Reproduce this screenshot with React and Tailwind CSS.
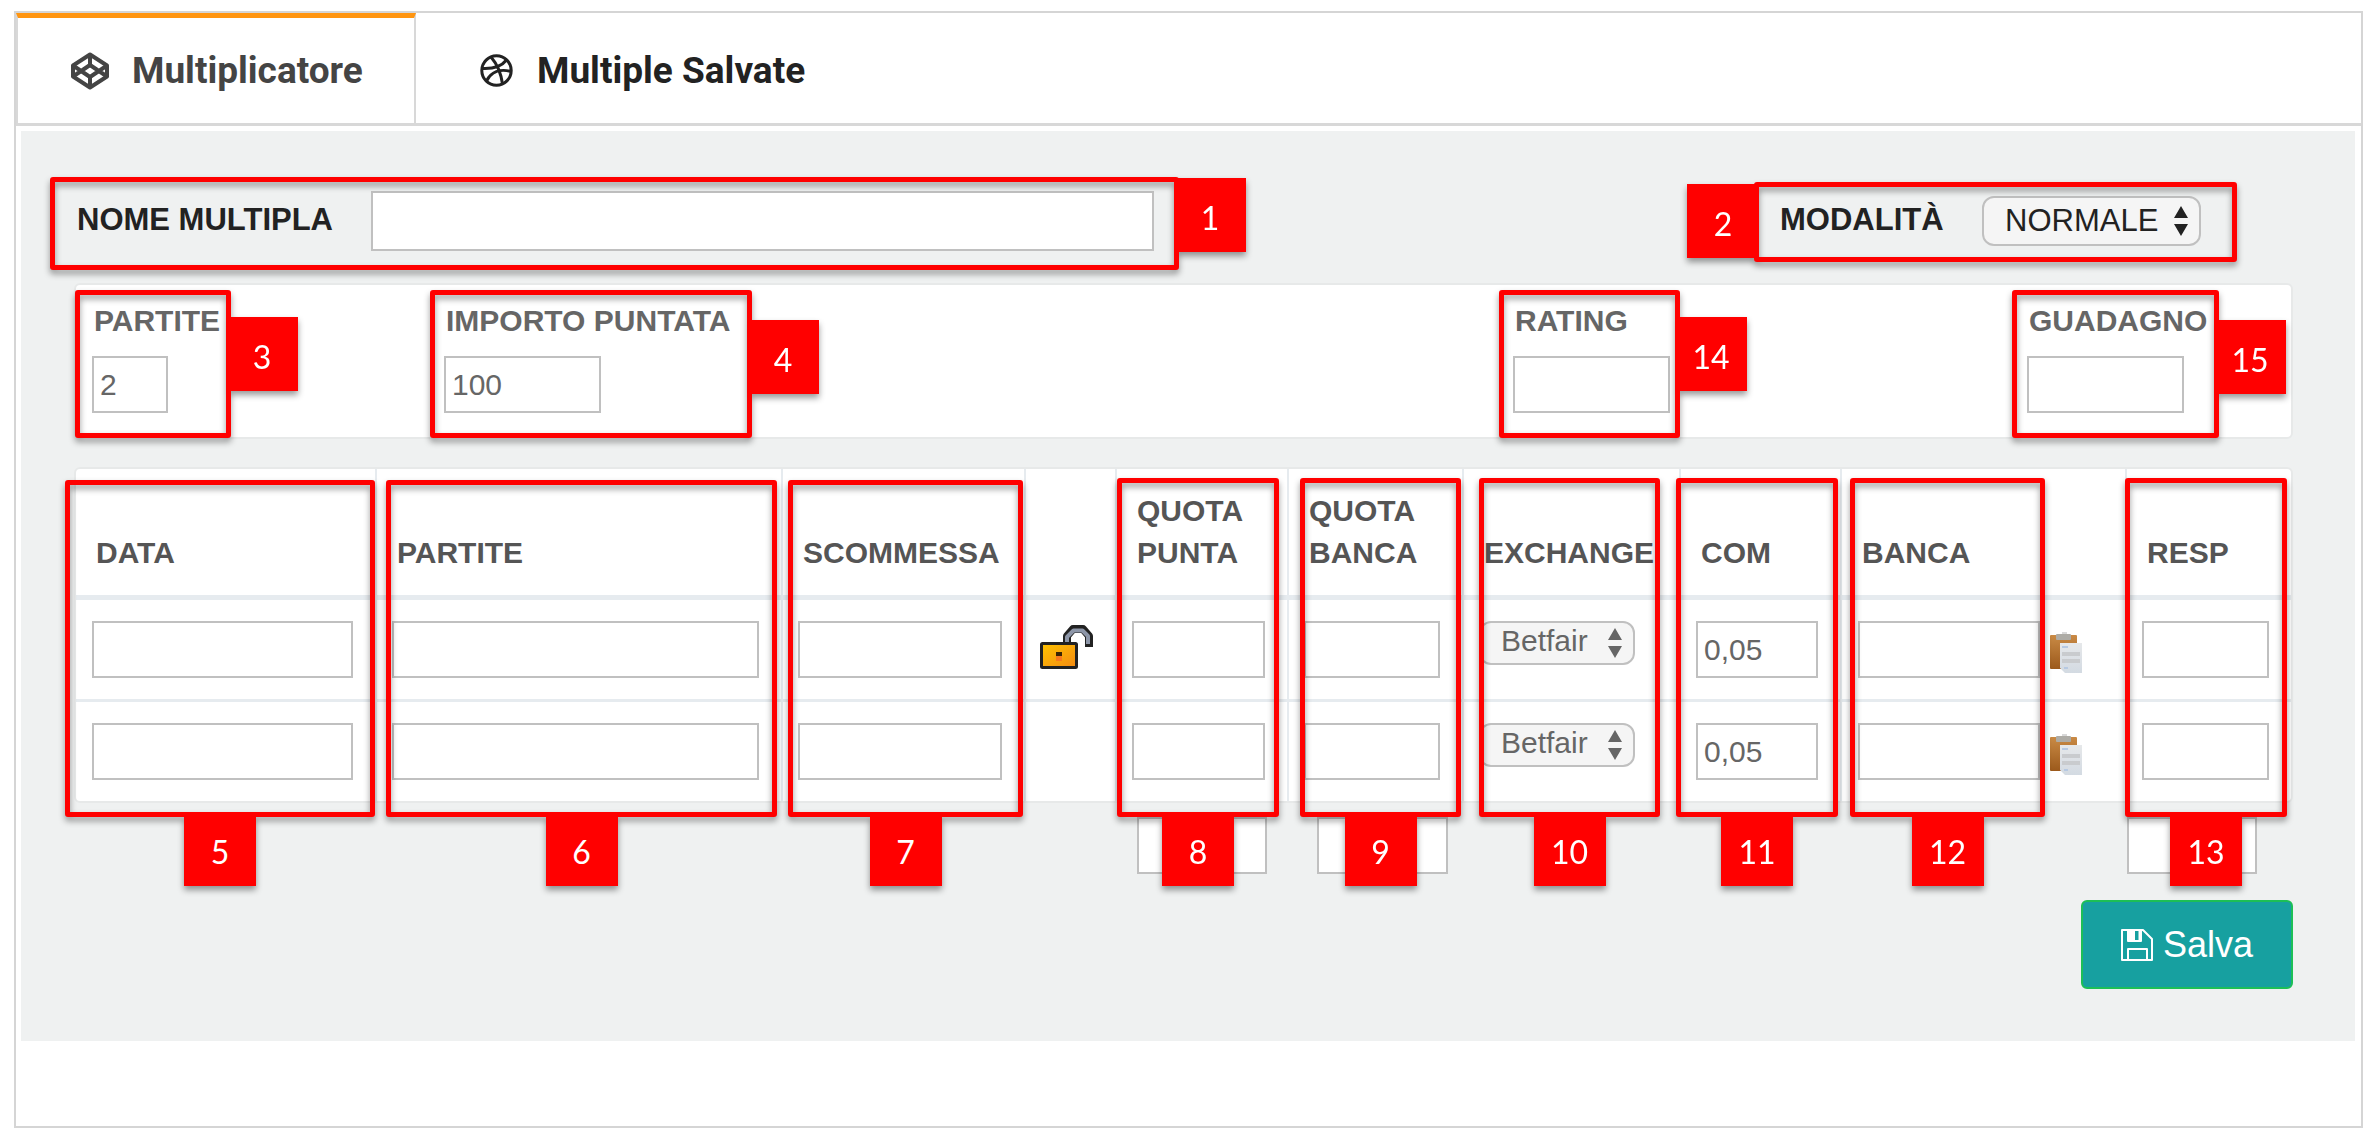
import React, { useState } from 'react';

const inputClass =
  'block h-[57px] border-2 border-[#c0c0c0] bg-white px-[6px] text-[30px] text-[#666] outline-none';

const Callout = ({ n, className, badgeClass = 'left-1/2 top-full -translate-x-1/2' }) => (
  <div
    className={`pointer-events-none absolute z-10 rounded-[3px] border-5 border-[#ff0000] drop-shadow-[0_4px_3px_rgba(0,0,0,0.4)] ${className}`}
  >
    <span
      className={`absolute flex h-[74px] w-[72px] items-center justify-center bg-[#ff0000] pt-1.5 font-[Lato,sans-serif] text-[32px] leading-none font-normal text-white ${badgeClass}`}
    >
      {n}
    </span>
  </div>
);

const UpDownArrows = ({ className }) => (
  <svg viewBox="0 0 16 30" className={`pointer-events-none absolute h-[30px] w-4 ${className}`} fill="currentColor">
    <path d="M8 0 L15 12 H1 Z M8 30 L15 18 H1 Z" />
  </svg>
);

const CodepenIcon = () => (
  <svg viewBox="0 0 40 38" className="h-[38px] w-10" fill="none" stroke="currentColor" strokeWidth="4" strokeLinejoin="round">
    <path d="M20 2.5 L37 13.500 V24.500 L20 35.500 L3 24.500 V13.500 Z" />
    <path d="M3 13.500 L20 25 L37 13.500 M3 24.500 L20 13 L37 24.500" />
    <path d="M20 2.5 V13 M20 25 V35.500" />
  </svg>
);

const DribbbleIcon = () => (
  <svg viewBox="0 0 33 33" className="size-[33px]" fill="none" stroke="currentColor" strokeWidth="3">
    <circle cx="16.500" cy="16.500" r="14.700" />
    <path d="M11 3 C17 10 21 19 22.500 30" />
    <path d="M2 14.500 C11 15 21 13 26.500 6" />
    <path d="M6.500 27 C11 18 20 14.500 31 17.500" />
  </svg>
);

const FloppyIcon = () => (
  <svg viewBox="0 0 32 32" className="h-8 w-8" fill="none" stroke="currentColor" strokeWidth="2" strokeLinejoin="round">
    <path d="M1 1 H22 L31 10 V31 H1 Z" />
    <path d="M7 31 V20 H26 V31" />
    <path d="M7 1 V12 H20 V1" />
    <path d="M7 2 H14 V11 H7 Z M17.500 2 H20 V11 H17.500 Z" fill="currentColor" stroke="none" />
  </svg>
);

const UnlockIcon = () => (
  <svg viewBox="0 0 53 44" className="h-11 w-[53px]">
    <defs>
      <linearGradient id="lockBody" x1="0" y1="0" x2="1" y2="1">
        <stop offset="0" stopColor="#ffc400" />
        <stop offset="1" stopColor="#f58a12" />
      </linearGradient>
    </defs>
    <path d="M27 20 V11 L33 4 H43 L49 11 V22" fill="none" stroke="#222" strokeWidth="8" strokeLinejoin="round" />
    <path d="M27 20 V12 L33.500 5.500 H42.500 L48 11 V19" fill="none" stroke="#8d96a8" strokeWidth="4" strokeLinejoin="round" />
    <rect x="1.500" y="18.500" width="35" height="24" rx="1" fill="url(#lockBody)" stroke="#222" strokeWidth="3" />
    <rect x="16" y="27" width="6" height="4" fill="#3a2405" />
    <rect x="16" y="31" width="6" height="5" fill="#f8791d" />
  </svg>
);

const ClipboardIcon = () => (
  <svg viewBox="0 0 32 41" className="h-[41px] w-8">
    <defs>
      <linearGradient id="board" x1="0" y1="0" x2="0" y2="1">
        <stop offset="0" stopColor="#c98a45" />
        <stop offset="1" stopColor="#9c5a1c" />
      </linearGradient>
      <linearGradient id="sheet" x1="0" y1="0" x2="0" y2="1">
        <stop offset="0" stopColor="#e6e8ea" />
        <stop offset="1" stopColor="#d3dae2" />
      </linearGradient>
    </defs>
    <rect x="0" y="3" width="27" height="34" rx="1" fill="url(#board)" />
    <rect x="12" y="0" width="5" height="3" fill="#d9d9d9" />
    <rect x="6" y="2" width="15" height="6" rx="1" fill="#aeaca6" />
    <path d="M10 11 H32 V41 H15 L10 36 Z" fill="url(#sheet)" />
    <rect x="12" y="14" width="6" height="2" fill="#b7c9e2" />
    <rect x="12" y="20" width="18" height="4" fill="#c9cbce" />
    <rect x="12" y="27" width="18" height="4" fill="#c9cbce" />
    <rect x="14" y="35" width="4" height="2" fill="#b7c9e2" />
  </svg>
);

const SummaryField = ({ id, label, value, width, className, children }) => (
  <div className={`relative ${className}`}>
    <label htmlFor={id} className="mb-3.5 block pl-[2px] text-[30px] leading-[42px] font-bold text-[#666]">
      {label}
    </label>
    <input id={id} defaultValue={value} className={`${inputClass} ${width}`} />
    {children}
  </div>
);

const columns = [
  { label: 'DATA', col: 'w-[299px]', n: 5, box: 'top-[11px] h-[337px] -left-[11px] right-0' },
  { label: 'PARTITE', col: '', n: 6, box: 'top-[11px] h-[337px] left-[9px] right-1' },
  { label: 'SCOMMESSA', col: 'w-[243px]', n: 7, box: 'top-[11px] h-[337px] left-[5px] right-px' },
  { label: '', col: 'w-[91px]' },
  { label: 'QUOTA PUNTA', col: 'w-[172px]', n: 8, box: 'top-[9px] h-[339px] left-0 right-2' },
  { label: 'QUOTA BANCA', col: 'w-[175px]', n: 9, box: 'top-[9px] h-[339px] left-[11px] right-px' },
  { label: 'EXCHANGE', col: 'w-[217px]', n: 10, box: 'top-[9px] h-[339px] left-[15px] right-[19px]' },
  { label: 'COM', col: 'w-[161px]', n: 11, box: 'top-[9px] h-[339px] -left-[5px] right-[2px]' },
  { label: 'BANCA', col: 'w-[285px]', n: 12, box: 'top-[9px] h-[339px] left-2 right-20' },
  { label: 'RESP', col: 'w-[166px]', n: 13, box: 'top-[9px] h-[339px] -left-[2px] right-1' },
];

const Cell = ({ children, className = 'pr-[22px] pl-[15px]' }) => (
  <td className={`border-l-2 border-[#e6ebef] py-[21px] align-top first:border-l-0 first:pl-4 ${className}`}>
    {children}
  </td>
);

const MatchRow = ({ index, locked }) => (
  <tr className="[&:not(:last-child)>td]:border-b-3">
    <Cell><input aria-label={`Data ${index}`} className={`${inputClass} w-full`} /></Cell>
    <Cell><input aria-label={`Partita ${index}`} className={`${inputClass} w-full`} /></Cell>
    <Cell><input aria-label={`Scommessa ${index}`} className={`${inputClass} w-full`} /></Cell>
    <Cell className="pl-3.5">
      {locked && (
        <button type="button" aria-label="Sblocca" className="mt-1 block">
          <UnlockIcon />
        </button>
      )}
    </Cell>
    <Cell><input aria-label={`Quota punta ${index}`} className={`${inputClass} w-full`} /></Cell>
    <Cell><input aria-label={`Quota banca ${index}`} className={`${inputClass} w-full`} /></Cell>
    <Cell>
      <div className="relative w-[156px] text-[#666]">
        <select
          aria-label={`Exchange ${index}`}
          className="block h-11 w-full appearance-none rounded-xl border-2 border-[#c0c0c0] bg-[#f5f5f5] pb-1 pl-5 text-[30px] leading-9 outline-none"
        >
          <option>Betfair</option>
        </select>
        <UpDownArrows className="top-[7px] right-3" />
      </div>
    </Cell>
    <Cell><input aria-label={`Commissione ${index}`} defaultValue="0,05" className={`${inputClass} w-full`} /></Cell>
    <Cell className="pl-4">
      <div className="flex items-start gap-2.5">
        <input aria-label={`Banca ${index}`} className={`${inputClass} w-[182px]`} />
        <button type="button" aria-label="Copia" className="mt-[11px]">
          <ClipboardIcon />
        </button>
      </div>
    </Cell>
    <Cell><input aria-label={`Responsabilità ${index}`} className={`${inputClass} w-full`} /></Cell>
  </tr>
);

function App() {
  const [tab, setTab] = useState('multiplicatore');

  const tabClass = (name) =>
    tab === name
      ? 'border-x-2 border-t-5 border-x-[#d8d8d8] border-t-[#ff9510] text-[#444]'
      : 'border-t-5 border-t-transparent text-[#222]';

  return (
    <div className="min-h-screen bg-white pt-[11px] pr-[11px] pb-3 pl-3.5 font-['Liberation_Sans',Arial,sans-serif]">
      <div className="border-2 border-[#d5d5d5]">
        <div role="tablist" className="flex h-[113px] border-b-3 border-[#d8d8d8] font-[Roboto,sans-serif] text-[37px] font-bold">
          <button
            type="button"
            role="tab"
            aria-selected={tab === 'multiplicatore'}
            onClick={() => setTab('multiplicatore')}
            className={`flex w-[400px] items-center gap-[22px] pl-[52px] ${tabClass('multiplicatore')}`}
          >
            <CodepenIcon />
            Multiplicatore
          </button>
          <button
            type="button"
            role="tab"
            aria-selected={tab === 'salvate'}
            onClick={() => setTab('salvate')}
            className={`flex items-center gap-6 px-16 ${tabClass('salvate')}`}
          >
            <DribbbleIcon />
            Multiple Salvate
          </button>
        </div>

        <div className="pt-[5px] pr-1.5 pb-[85px] pl-[5px]">
          <form onSubmit={(e) => e.preventDefault()} className="bg-[#eff1f1] pt-[60px] pr-[62px] pb-[52px] pl-[53px]">
            <div className="mb-8 flex h-[60px] justify-between pr-[92px] text-[31px] text-[#222]">
              <div className="relative flex items-center">
                <label htmlFor="nome" className="w-[297px] pb-0.5 pl-[3px] font-bold">NOME MULTIPLA</label>
                <input id="nome" className="h-[60px] w-[783px] border-2 border-[#c0c0c0] bg-white px-2 outline-none" />
                <Callout n={1} className="-top-3.5 -left-6 h-[93px] w-[1129px]" badgeClass="-top-1 left-full" />
              </div>
              <div className="relative flex items-center">
                <label htmlFor="modalita" className="w-[204px] pb-0.5 pl-[2px] font-bold">MODALITÀ</label>
                <div className="relative">
                  <select
                    id="modalita"
                    className="block h-[50px] w-[219px] appearance-none rounded-xl border-2 border-[#c0c0c0] bg-[#f5f5f5] pb-1 pl-[21px] outline-none"
                  >
                    <option>NORMALE</option>
                  </select>
                  <UpDownArrows className="top-2.5 right-3" />
                </div>
                <Callout n={2} className="-top-[9px] -left-6 h-20 w-[483px]" badgeClass="-top-[3px] right-full" />
              </div>
            </div>

            <div className="mb-7 flex rounded-md border-2 border-[#e7e9e9] bg-white pt-[15px] pb-6 pl-4">
              <SummaryField id="partite" label="PARTITE" value="2" width="w-[76px]" className="w-[352px]">
                <Callout n={3} className="-top-2.5 -left-[17px] h-[148px] w-[156px]" badgeClass="top-[22px] left-full" />
              </SummaryField>
              <SummaryField id="importo" label="IMPORTO PUNTATA" value="100" width="w-[157px]" className="flex-1">
                <Callout n={4} className="-top-2.5 -left-3.5 h-[148px] w-[322px]" badgeClass="top-[25px] left-full" />
              </SummaryField>
              <SummaryField id="rating" label="RATING" width="w-[157px]" className="w-[514px]">
                <Callout n={14} className="-top-2.5 -left-3.5 h-[148px] w-[181px]" badgeClass="top-[22px] left-full" />
              </SummaryField>
              <SummaryField id="guadagno" label="GUADAGNO" width="w-[157px]" className="w-[264px]">
                <Callout n={15} className="-top-2.5 -left-[15px] h-[148px] w-[207px]" badgeClass="top-[25px] left-full" />
              </SummaryField>
            </div>

            <div className="rounded-md border-2 border-[#e7e9e9] bg-white">
              <table className="w-full table-fixed border-separate border-spacing-0">
                <colgroup>
                  {columns.map((c, i) => <col key={i} className={c.col} />)}
                </colgroup>
                <thead>
                  <tr>
                    {columns.map((c, i) => (
                      <th
                        key={i}
                        className="relative border-b-5 border-l-2 border-[#e6ebef] py-[21px] pl-5 text-left align-bottom text-[30px] leading-[42px] text-[#555] first:border-l-0"
                      >
                        {c.label}
                        {c.n && <Callout n={c.n} className={c.box} />}
                      </th>
                    ))}
                  </tr>
                </thead>
                <tbody>
                  <MatchRow index={1} locked />
                  <MatchRow index={2} />
                </tbody>
              </table>
            </div>

            <div className="mt-3.5 mb-[26px] flex justify-end pr-9">
              <input aria-label="Totale quota punta" className={`${inputClass} mr-[50px] w-[130px]`} />
              <input aria-label="Totale quota banca" className={`${inputClass} mr-[679px] w-[131px]`} />
              <input aria-label="Totale responsabilità" className={`${inputClass} w-[130px]`} />
            </div>

            <div className="flex justify-end">
              <button
                type="submit"
                className="flex h-[89px] w-[212px] items-center justify-center gap-2.5 rounded-md border-2 border-[#1dbf56] bg-[#17a0a0] text-[36px] text-white"
              >
                <FloppyIcon />
                Salva
              </button>
            </div>
          </form>
        </div>
      </div>
    </div>
  );
}

export default App;
